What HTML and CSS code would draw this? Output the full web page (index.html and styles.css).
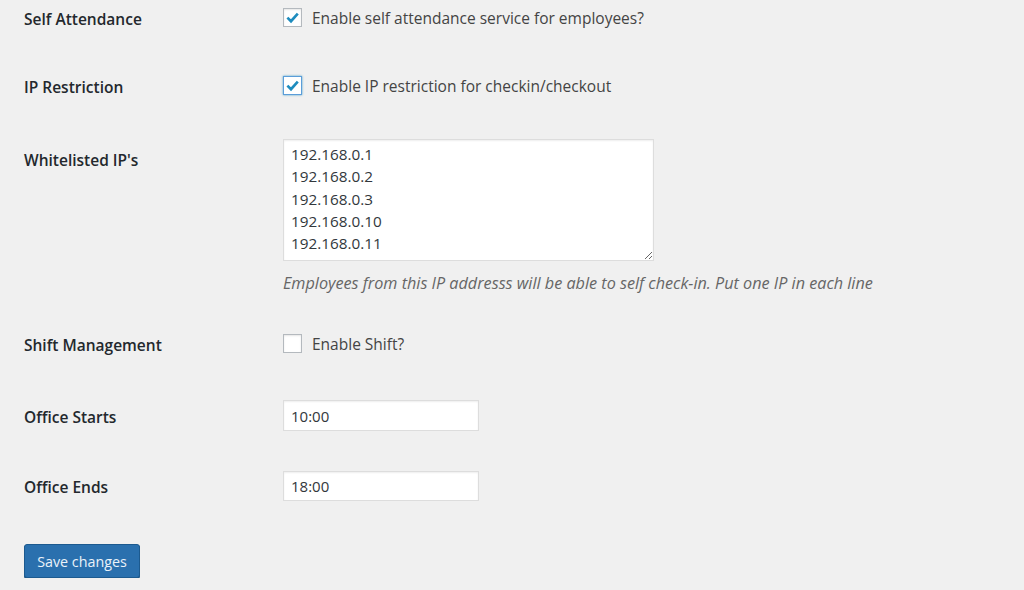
FILE: index.html
```html
<!DOCTYPE html>
<html lang="en">
<head>
<meta charset="utf-8">
<title>Attendance Settings</title>
<link rel="stylesheet" href="styles.css">
</head>
<body>
<form class="settings">
  <div class="row row-self">
    <div class="label">Self Attendance</div>
    <label class="check"><span class="box"><svg viewBox="0 0 18 18" width="18" height="18"><path d="M3.6 8.6 L7.4 12.4 L14.6 4.4" fill="none" stroke="#1e8cbe" stroke-width="2.8"/></svg></span>Enable self attendance service for employees?</label>
  </div>
  <div class="row row-ip">
    <div class="label">IP Restriction</div>
    <label class="check"><span class="box focus"><svg viewBox="0 0 18 18" width="18" height="18"><path d="M3.6 8.6 L7.4 12.4 L14.6 4.4" fill="none" stroke="#1e8cbe" stroke-width="2.8"/></svg></span>Enable IP restriction for checkin/checkout</label>
  </div>
  <div class="row row-white">
    <div class="label label-top">Whitelisted IP's</div>
    <div class="field">
      <textarea class="ips" spellcheck="false">192.168.0.1
192.168.0.2
192.168.0.3
192.168.0.10
192.168.0.11</textarea>
      <p class="desc">Employees from this IP addresss will be able to self check-in. Put one IP in each line</p>
    </div>
  </div>
  <div class="row row-shift">
    <div class="label">Shift Management</div>
    <label class="check"><span class="box"></span>Enable Shift?</label>
  </div>
  <div class="row row-start">
    <div class="label">Office Starts</div>
    <input class="text" type="text" value="10:00">
  </div>
  <div class="row row-end">
    <div class="label">Office Ends</div>
    <input class="text" type="text" value="18:00">
  </div>
  <button type="button" class="save">Save changes</button>
</form>
</body>
</html>
```

FILE: styles.css
```css
html, body {
  margin: 0;
  padding: 0;
  background: #f0f0f0;
}
body {
  font-family: "Open Sans", "Noto Sans", sans-serif;
  font-size: 15px;
  color: #444;
}
.settings {
  padding: 6px 0 0 24px;
}
.row {
  display: grid;
  grid-template-columns: 259px 1fr;
  align-items: center;
}
.label {
  font-weight: 600;
  color: #23282d;
  line-height: 22px;
  font-size: 15.5px;
  padding-top: 2px;
}
.label-top {
  align-self: start;
  padding-top: 10px;
}
.row-self { margin-bottom: 44px; }
.row-ip { margin-bottom: 41px; }
.row-white { margin-bottom: 38px; }
.row-shift { margin-bottom: 44px; }
.row-start { margin-bottom: 40px; }
.row-end { margin-bottom: 43px; }

.check {
  display: flex;
  align-items: center;
  line-height: 22px;
  font-size: 15.5px;
  color: #444;
}
.box {
  width: 17px;
  height: 17px;
  border: 1px solid #b4b9be;
  background: #fff;
  box-shadow: inset 0 1px 2px rgba(0,0,0,0.1);
  margin-right: 10px;
  margin-top: -1px;
  display: flex;
  align-items: center;
  justify-content: center;
  flex: none;
}
.box svg { display: block; }
.box.focus {
  border-color: #5b9dd9;
  box-shadow: 0 0 2px rgba(30,140,190,0.8);
}
.field {
  display: flex;
  flex-direction: column;
}
.ips {
  width: 371px;
  height: 122px;
  box-sizing: border-box;
  border: 1px solid #ddd;
  background: #fff;
  padding: 3px 7px;
  font-family: inherit;
  font-size: 15.3px;
  line-height: 22.3px;
  color: #32373c;
  margin: 0;
  box-shadow: inset 0 1px 2px rgba(0,0,0,0.07);
  outline: none;
  overflow: hidden;
}
.desc {
  margin: 11px 0 0;
  font-style: italic;
  font-size: 16.2px;
  color: #666;
  line-height: 22px;
}
.text {
  width: 196px;
  height: 31px;
  box-sizing: border-box;
  border: 1px solid #ddd;
  background: #fff;
  padding: 0 7px;
  font-family: inherit;
  font-size: 15px;
  color: #32373c;
  margin: 0;
  box-shadow: inset 0 1px 2px rgba(0,0,0,0.07);
  outline: none;
}
.row-end .text { height: 30px; }
.save {
  display: block;
  width: 116px;
  height: 34px;
  background: #2a70ae;
  border: 1px solid #1c5a8f;
  border-radius: 3px;
  color: #eaf2f9;
  font-family: inherit;
  font-size: 14.3px;
  padding: 0;
  box-shadow: 0 1px 0 #1a5280;
  cursor: pointer;
}
```
